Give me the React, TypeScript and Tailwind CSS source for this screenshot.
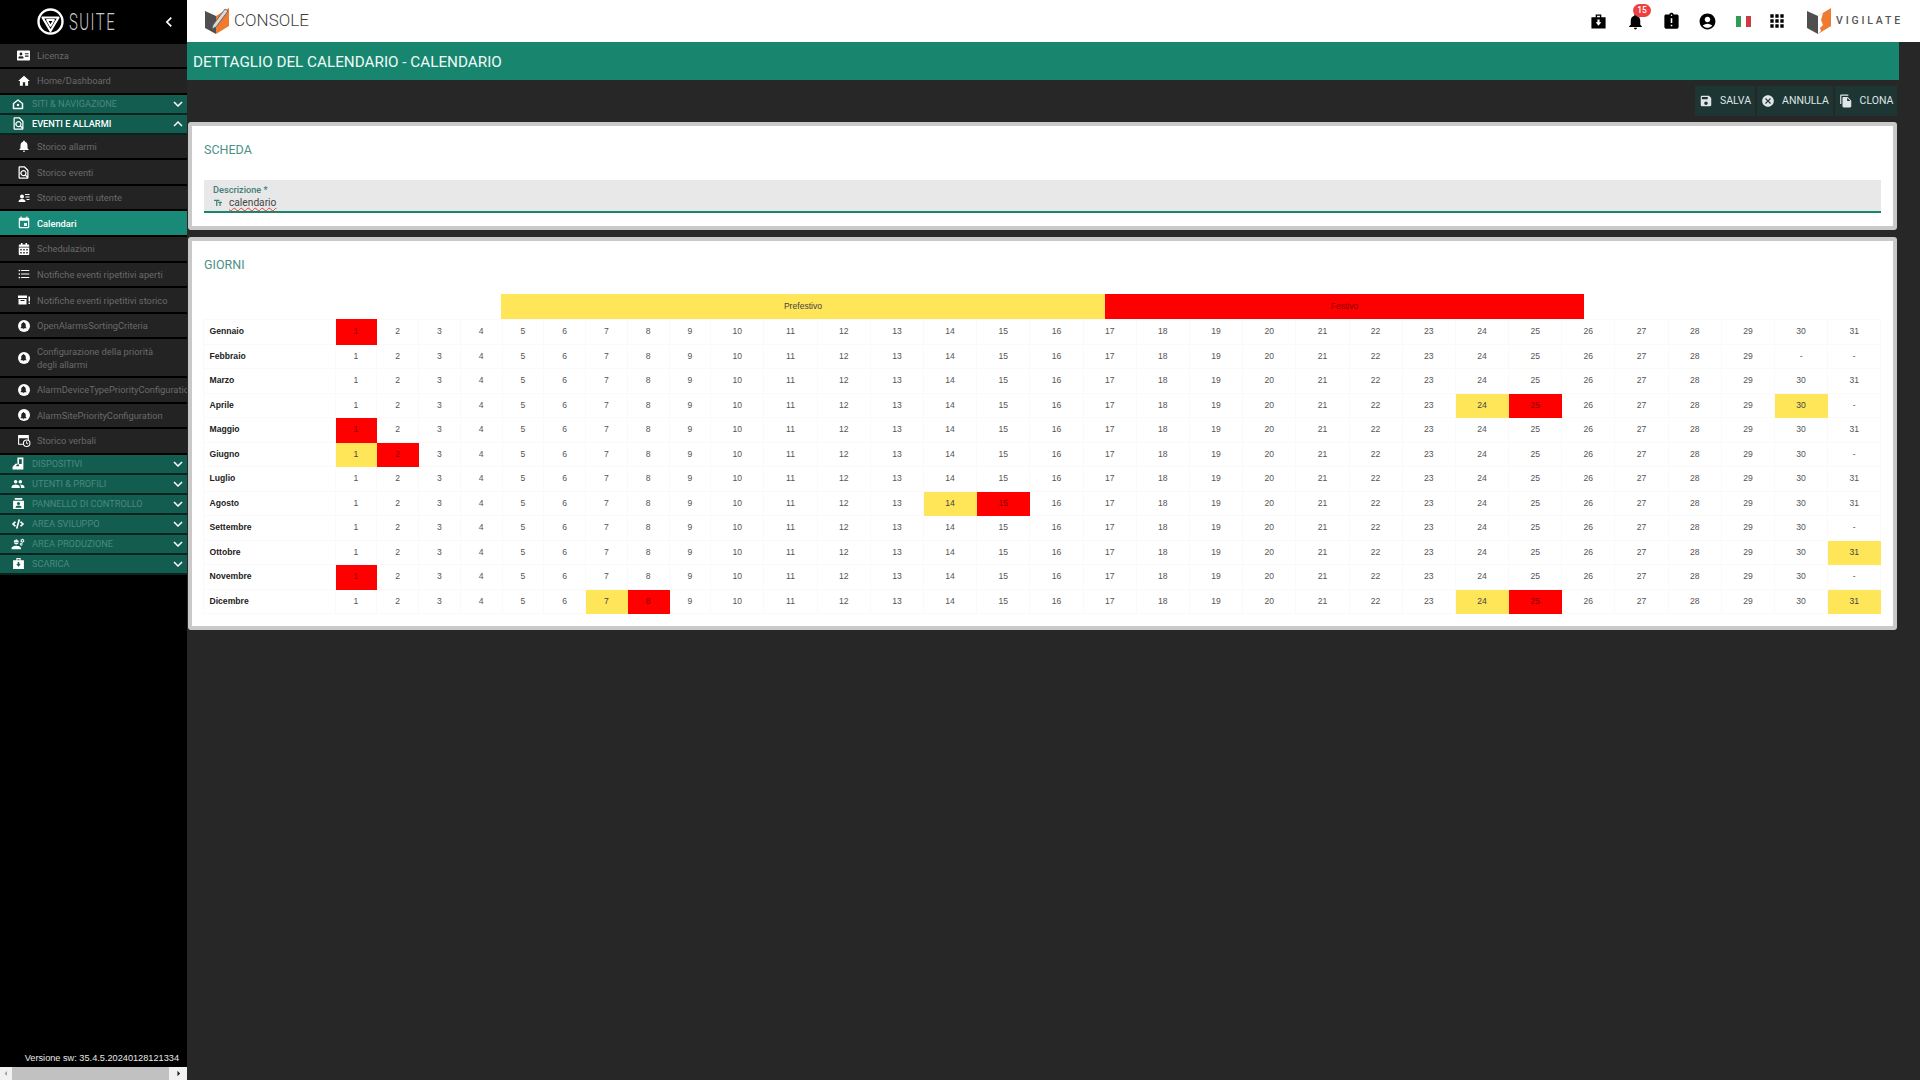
import React from "react";
import {
  MdHome,
  MdNotifications,
  MdOutlineFindInPage,
  MdEvent,
  MdFormatListBulleted,
  MdPeople,
  MdEngineering,
  MdAssignmentLate,
  MdAccountCircle,
  MdApps,
  MdSave,
  MdCancel,
  MdFileCopy,
  MdKeyboardArrowDown,
  MdKeyboardArrowUp,
  MdChevronLeft,
  MdArrowLeft,
  MdArrowRight,
  MdTextFields,
} from "react-icons/md";
import { FaAddressCard, FaCalendarAlt, FaCode } from "react-icons/fa";

type Mark = Record<number, "y" | "r">;

const months: { name: string; days: number; marks: Mark }[] = [
  { name: "Gennaio", days: 31, marks: { 1: "r" } },
  { name: "Febbraio", days: 29, marks: {} },
  { name: "Marzo", days: 31, marks: {} },
  { name: "Aprile", days: 30, marks: { 24: "y", 25: "r", 30: "y" } },
  { name: "Maggio", days: 31, marks: { 1: "r" } },
  { name: "Giugno", days: 30, marks: { 1: "y", 2: "r" } },
  { name: "Luglio", days: 31, marks: {} },
  { name: "Agosto", days: 31, marks: { 14: "y", 15: "r" } },
  { name: "Settembre", days: 30, marks: {} },
  { name: "Ottobre", days: 31, marks: { 31: "y" } },
  { name: "Novembre", days: 30, marks: { 1: "r" } },
  { name: "Dicembre", days: 31, marks: { 7: "y", 8: "r", 24: "y", 25: "r", 31: "y" } },
];

const dayNumbers = Array.from({ length: 31 }, (_, i) => i + 1);

function BellCircle() {
  return (
    <span className="flex h-[12px] w-[12px] items-center justify-center rounded-full bg-white text-[#222]">
      <MdNotifications size={9} />
    </span>
  );
}

function SitesIcon() {
  return (
    <svg width="12" height="12" viewBox="0 0 24 24" fill="none" stroke="white" strokeWidth="3">
      <path d="M12 4 3 11v10h18V11z" strokeLinejoin="round" />
      <circle cx="12" cy="14" r="2.5" fill="white" stroke="none" />
    </svg>
  );
}

function UserListIcon() {
  return (
    <svg width="12" height="12" viewBox="0 0 24 24" fill="white">
      <circle cx="8" cy="9" r="4" />
      <path d="M1 20c0-4 3-6 7-6s7 2 7 6z" />
      <path d="M14 4h9v2h-9zM15 9h8v2h-8zM17 14h6v2h-6z" />
    </svg>
  );
}

function ArchiveAlertIcon() {
  return (
    <svg width="14" height="12" viewBox="0 0 28 24" fill="white">
      <path d="M2 3h18v5H2z" />
      <path d="M3 10h16v11H3zM7 12v2h8v-2z" fillRule="evenodd" />
      <path d="M23 5h3v10h-3zM23 17h3v3h-3z" />
    </svg>
  );
}

function MinutesIcon() {
  return (
    <svg width="14" height="13" viewBox="0 0 26 24" fill="white">
      <path d="M2 2h20v10h-2V8H4v10h7v2H2z" />
      <circle cx="18" cy="17" r="6" fill="none" stroke="white" strokeWidth="2" />
      <path d="M17 13.5h1.8v3.2l2.4 1.4-.9 1.4-3.3-2z" />
    </svg>
  );
}

function DeviceIcon() {
  return (
    <svg width="13" height="13" viewBox="0 0 24 24" fill="white">
      <path d="M10 1h11v22H10v-6h3v-3h-3z" />
      <path d="M1 23v-5l6-6 3 1-3 4h4v6z" />
      <path d="M13 4v9h5V4z" fill="#125c50" />
    </svg>
  );
}

function PanelIcon() {
  return (
    <svg width="13" height="13" viewBox="0 0 24 24" fill="white">
      <path d="M5 2h14v3H5zM2 7h20v15H2z" />
      <circle cx="12" cy="12" r="2.8" fill="#125c50" />
      <path d="M6.5 20c0-3 2.5-4.5 5.5-4.5s5.500 1.500 5.500 4.500z" fill="#125c50" />
    </svg>
  );
}

function CaseIcon({ size, color, hole }: { size: number; color: string; hole: string }) {
  return (
    <svg width={size} height={size} viewBox="0 0 24 24" fill={color}>
      <path d="M8 2h8v4h6v16H2V6h6zm2 2v2h4V4z" fillRule="evenodd" />
      <path d="M10.500 9h3v4H16l-4 5-4-5h2.500z" fill={hole} />
    </svg>
  );
}

function BookLogo({ pencil }: { pencil?: boolean }) {
  return (
    <svg width="24" height="26" viewBox="0 0 24 26">
      <path d="M0 3 11 8v18L0 20z" fill="#4f4f4f" />
      <path d="M11 8l13-8v18l-13 8z" fill="#ee7b30" />
      {pencil ? (
        <path d="M8 17 20 1l3 2-12 16-4 2z" fill="#d9d9d9" stroke="#555" strokeWidth="0.8" />
      ) : (
        <path d="M11 8l5-3-2 7 2 5-3 3 1 3-3 3z" fill="white" />
      )}
    </svg>
  );
}

function SuiteLogo() {
  return (
    <svg width="27" height="27" viewBox="0 0 27 27" fill="none" stroke="white" strokeLinecap="round" strokeLinejoin="round">
      <circle cx="13.5" cy="13.500" r="12" strokeWidth="2.400" />
      <path d="M5.500 9.500 21.500 9.500 13.500 23z" strokeWidth="2.200" />
      <path d="M10 12h7l-3.500 6z" strokeWidth="1.800" />
    </svg>
  );
}

function NavItem({ icon, label, active, tall }: { icon: React.ReactNode; label: React.ReactNode; active?: boolean; tall?: boolean }) {
  return (
    <div
      className={`flex items-center overflow-hidden whitespace-nowrap border-b-2 border-black text-[9.300px] leading-[13px] ${
        tall ? "h-[38.500px]" : "h-[25.600px]"
      } ${active ? "bg-[#1a8a78] font-medium text-white" : "bg-[#232323] text-[#6a6a6a]"}`}
    >
      <span className="flex w-[37px] shrink-0 justify-center pl-[10px] text-white">{icon}</span>
      <span>{label}</span>
    </div>
  );
}

function NavGroup({ icon, label, open }: { icon: React.ReactNode; label: string; open?: boolean }) {
  return (
    <div
      className={`flex h-[20px] items-center border-b-2 border-[#07241f] bg-[#125c50] text-[9.200px] ${
        open ? "font-medium text-white" : "text-[#4a8a7f]"
      }`}
    >
      <span className="flex w-[32px] shrink-0 justify-center pl-[4px] text-white">{icon}</span>
      <span className="flex-1">{label}</span>
      <span className="text-white">
        {open ? <MdKeyboardArrowUp size={18} /> : <MdKeyboardArrowDown size={18} />}
      </span>
    </div>
  );
}

function ActionButton({ icon, label, width }: { icon: React.ReactNode; label: string; width: string }) {
  return (
    <button className={`flex h-[30px] items-center justify-center gap-[7px] bg-[#1d3533] text-[10.500px] text-[#dfe6e5] ${width}`}>
      {icon}
      {label}
    </button>
  );
}

function Card({ title, titleClass, children }: { title: string; titleClass: string; children: React.ReactNode }) {
  return (
    <section className="rounded-[3px] border-4 border-[#c9c9c9] bg-white pl-[12px] pr-[12px]">
      <h2 className={`text-[12.500px] leading-[14px] text-[#4c9188] ${titleClass}`}>{title}</h2>
      {children}
    </section>
  );
}

export default function App() {
  return (
    <div className="flex h-[1080px] w-[1920px] overflow-hidden bg-[#272727] font-['Roboto',sans-serif]">
      {/* Sidebar */}
      <aside className="flex w-[187px] shrink-0 flex-col bg-black">
        <div className="flex h-[43.500px] shrink-0 items-center pl-[37px]">
          <SuiteLogo />
          <span className="ml-[5px] w-[44px] origin-left scale-x-[0.62] text-[24px] font-light tracking-[0.1em] text-[#c8c8c8]">
            SUITE
          </span>
          <span className="ml-[46px] text-white">
            <MdChevronLeft size={20} />
          </span>
        </div>
        <NavItem icon={<FaAddressCard size={13} />} label="Licenza" />
        <NavItem icon={<MdHome size={14} />} label="Home/Dashboard" />
        <NavGroup icon={<SitesIcon />} label="SITI & NAVIGAZIONE" />
        <NavGroup icon={<MdOutlineFindInPage size={15} />} label="EVENTI E ALLARMI" open />
        <NavItem icon={<MdNotifications size={14} />} label="Storico allarmi" />
        <NavItem icon={<MdOutlineFindInPage size={15} />} label="Storico eventi" />
        <NavItem icon={<UserListIcon />} label="Storico eventi utente" />
        <NavItem icon={<MdEvent size={14} />} label="Calendari" active />
        <NavItem icon={<FaCalendarAlt size={12} />} label="Schedulazioni" />
        <NavItem icon={<MdFormatListBulleted size={14} />} label="Notifiche eventi ripetitivi aperti" />
        <NavItem icon={<ArchiveAlertIcon />} label="Notifiche eventi ripetitivi storico" />
        <NavItem icon={<BellCircle />} label="OpenAlarmsSortingCriteria" />
        <NavItem
          icon={<BellCircle />}
          label={
            <>
              Configurazione della priorità
              <br />
              degli allarmi
            </>
          }
          tall
        />
        <NavItem icon={<BellCircle />} label="AlarmDeviceTypePriorityConfiguration" />
        <NavItem icon={<BellCircle />} label="AlarmSitePriorityConfiguration" />
        <NavItem icon={<MinutesIcon />} label="Storico verbali" />
        <NavGroup icon={<DeviceIcon />} label="DISPOSITIVI" />
        <NavGroup icon={<MdPeople size={14} />} label="UTENTI & PROFILI" />
        <NavGroup icon={<PanelIcon />} label="PANNELLO DI CONTROLLO" />
        <NavGroup icon={<FaCode size={12} />} label="AREA SVILUPPO" />
        <NavGroup icon={<MdEngineering size={14} />} label="AREA PRODUZIONE" />
        <NavGroup icon={<CaseIcon size={13} color="white" hole="#125c50" />} label="SCARICA" />
        <div className="flex flex-1 items-end justify-end pb-[3px] pr-[8px] font-['Liberation_Sans',sans-serif] text-[9.200px] leading-[12px] text-[#e8e8e8]">
          Versione sw: 35.4.5.20240128121334
        </div>
        <div className="flex h-[13px] items-center bg-[#f1f1f1]">
          <span className="flex w-[12px] justify-center text-[#a3a3a3]">
            <MdArrowLeft size={13} />
          </span>
          <span className="h-full flex-1 bg-[#c1c1c1]" />
          <span className="flex w-[18px] justify-center text-[#222]">
            <MdArrowRight size={13} />
          </span>
        </div>
      </aside>

      {/* Main */}
      <div className="flex min-w-0 flex-1 flex-col">
        <header className="flex h-[42px] shrink-0 items-center bg-white pl-[18px]">
          <BookLogo pencil />
          <span className="ml-[5px] text-[17px] font-light text-[#3f3f3f]">CONSOLE</span>
          <div className="ml-auto flex items-center text-black">
            <CaseIcon size={17} color="black" hole="white" />
            <span className="relative ml-[19px] flex">
              <MdNotifications size={19} />
              <span className="absolute -top-[8px] left-[7px] flex h-[13px] w-[18px] items-center justify-center rounded-full bg-[#ef3f3f] text-[8.500px] font-medium text-white">
                15
              </span>
            </span>
            <span className="ml-[17px] flex">
              <MdAssignmentLate size={19} />
            </span>
            <span className="ml-[17px] flex">
              <MdAccountCircle size={19} />
            </span>
            <span className="ml-[19px] flex h-[11px] w-[15px] overflow-hidden">
              <span className="flex-1 bg-[#2e9c55]" />
              <span className="flex-1 bg-white" />
              <span className="flex-1 bg-[#cf3a45]" />
            </span>
            <span className="ml-[16px] flex">
              <MdApps size={20} />
            </span>
            <span className="ml-[20px] flex">
              <BookLogo />
            </span>
            <span className="ml-[5px] mr-[17px] text-[10.500px] font-medium tracking-[0.27em] text-[#555]">VIGILATE</span>
          </div>
        </header>

        <div className="flex flex-1 flex-col pl-[1px] pr-[23px]">
          <div className="-ml-[1px] -mr-[2px] flex h-[38px] shrink-0 items-center bg-[#18866f] pl-[6px] pt-[3px] text-[15.250px] font-normal text-[#eefbf8]">
            DETTAGLIO DEL CALENDARIO - CALENDARIO
          </div>

          <div className="flex h-[42px] shrink-0 items-start justify-end gap-[2px] pt-[6px]">
            <ActionButton icon={<MdSave size={14} />} label="SALVA" width="w-[60px]" />
            <ActionButton icon={<MdCancel size={14} />} label="ANNULLA" width="w-[76px]" />
            <ActionButton icon={<MdFileCopy size={14} />} label="CLONA" width="w-[62px]" />
          </div>

          <div className="flex flex-col gap-[7px]">
            <Card title="SCHEDA" titleClass="pt-[17px]">
              <div className="mt-[23px] mb-[13px] h-[33px] border-b-2 border-[#18866f] bg-[#e8e8e8] pl-[9px] pt-[4px]">
                <div className="text-[9.200px] font-medium leading-[11px] text-[#3f8076]">Descrizione *</div>
                <div className="mt-[1px] flex items-center text-[10.200px] leading-[13px] text-[#444]">
                  <span className="flex w-[16px] text-[#3f8076]">
                    <MdTextFields size={10} />
                  </span>
                  <span className="underline decoration-[#e53935] decoration-wavy decoration-[0.5px] underline-offset-[1px]">calendario</span>
                </div>
              </div>
            </Card>

            <Card title="GIORNI" titleClass="pt-[17px]">
              <div className="mt-[22px] font-['Liberation_Sans',sans-serif] text-[8.600px] text-[#555]">
                {/* Legend row does not follow the day columns */}
                <div className="flex h-[25px] text-center leading-[25px]">
                  <div className="w-[297px]" />
                  <div className="w-[604px] bg-[#ffe558] text-[#444]">Prefestivo</div>
                  <div className="w-[479px] bg-[#ff0000] text-[#8a0000]">Festivo</div>
                </div>
                <table className="-ml-[1.500px] w-[1678px] table-fixed border-collapse">
                  <colgroup>
                    <col className="w-[132px]" />
                    {dayNumbers.map((d) => (
                      <col key={d} className={d < 10 ? "w-[41.750px]" : "w-[53.200px]"} />
                    ))}
                  </colgroup>
                  <tbody>
                    {months.map((m) => (
                      <tr key={m.name} className="h-[24.500px]">
                        <td className="border border-[#fafafa] pl-[6px] font-bold text-[#222]">{m.name}</td>
                        {dayNumbers.map((d) => {
                          const mark = m.marks[d];
                          return (
                            <td
                              key={d}
                              className={`border border-[#fafafa] text-center ${
                                mark === "r"
                                  ? "border-[#ff0000] bg-[#ff0000] text-[#8a0000]"
                                  : mark === "y"
                                    ? "border-[#ffe558] bg-[#ffe558] text-[#444]"
                                    : ""
                              }`}
                            >
                              {d <= m.days ? d : "-"}
                            </td>
                          );
                        })}
                      </tr>
                    ))}
                  </tbody>
                </table>
                <div className="h-[12px]" />
              </div>
            </Card>
          </div>
        </div>
      </div>
    </div>
  );
}
